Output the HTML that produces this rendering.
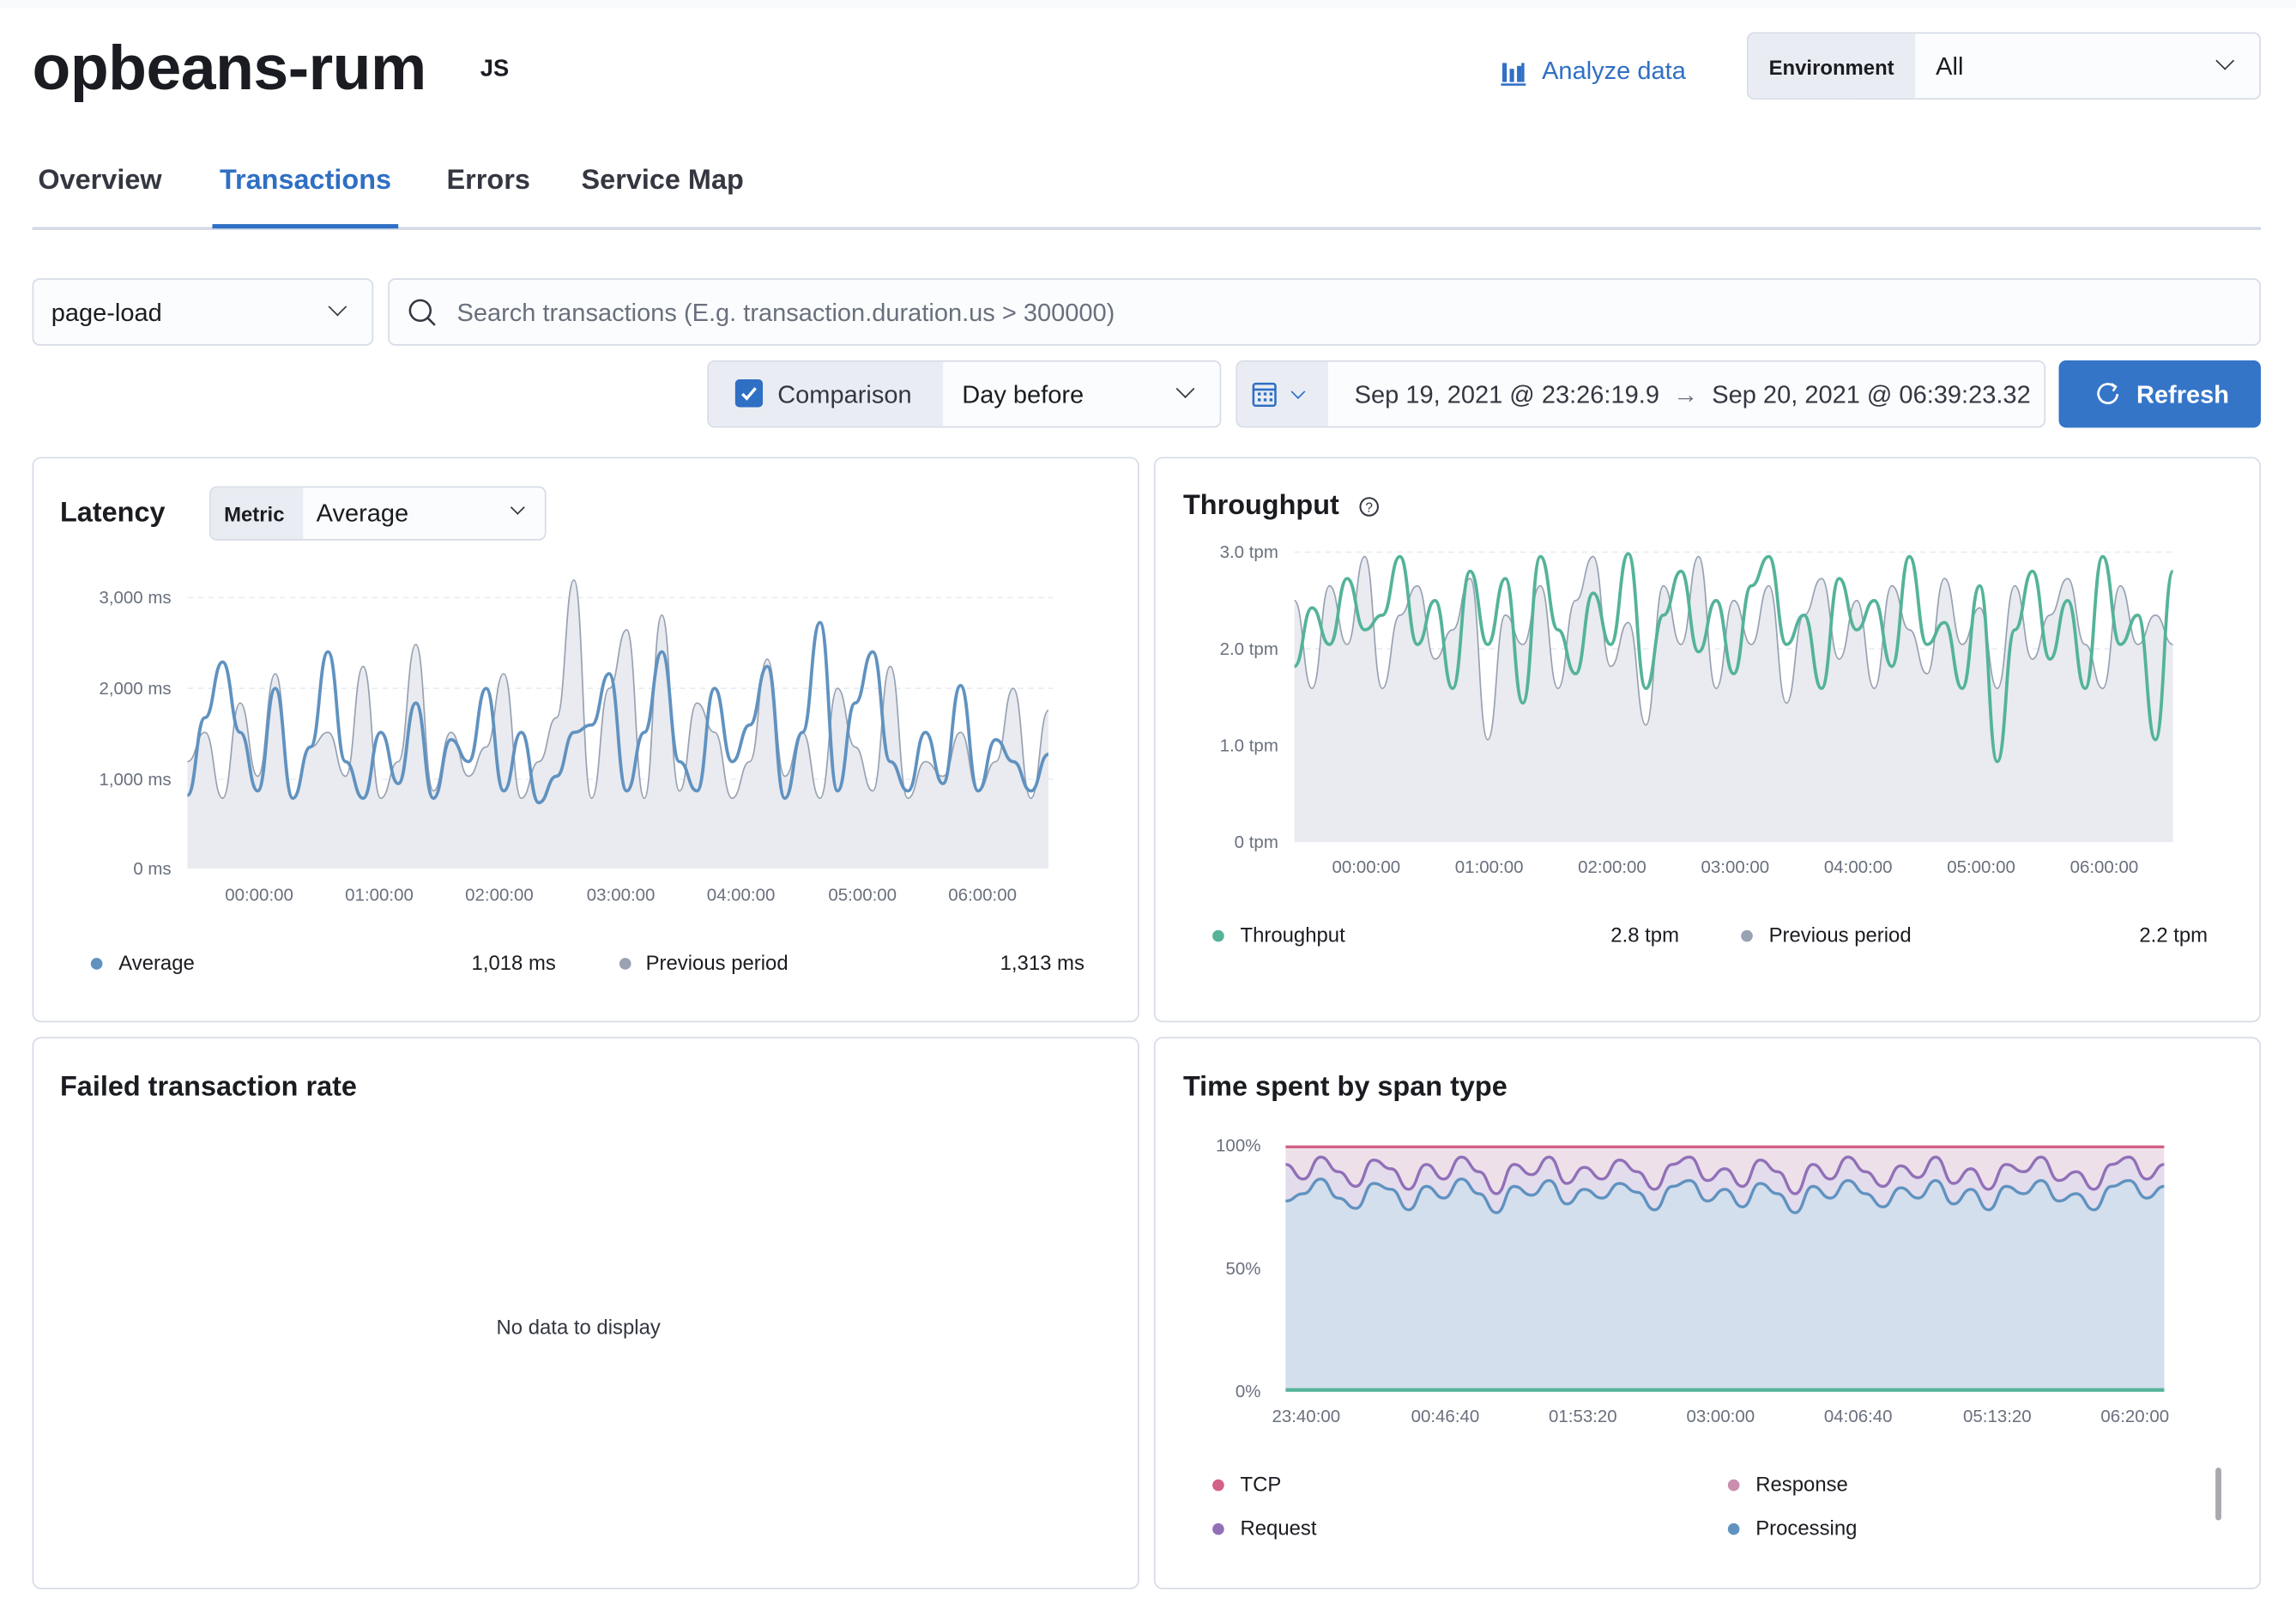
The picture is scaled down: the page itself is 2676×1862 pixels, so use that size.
<!DOCTYPE html>
<html><head><meta charset="utf-8">
<style>
*{box-sizing:border-box;margin:0;padding:0}
html,body{width:2676px;height:1862px;overflow:hidden;background:#fff}
#w{position:absolute;left:0;top:0;width:1568px;height:1091px;transform:scale(1.70663);transform-origin:0 0;font-family:"Liberation Sans",sans-serif;color:#1a1c21}
.a{position:absolute}
.box{position:absolute;border:1px solid #d6dbe6;border-radius:5px;background:#fbfcfd}
.panel{position:absolute;border:1px solid #d6dbe6;border-radius:6px;background:#fff}
.t{position:absolute;white-space:nowrap}
.chev{position:absolute;width:9px;height:9px;border-right:1.5px solid #343741;border-bottom:1.5px solid #343741;transform:rotate(45deg)}
.ax{font-size:12px;fill:#69707d;font-family:"Liberation Sans",sans-serif}
.dot{position:absolute;width:8px;height:8px;border-radius:50%}
</style></head><body><div id="w">
<div class="a" style="left:0;top:0;width:1568px;height:6px;background:#f9fafb"></div>
<div class="t" style="left:22px;top:23px;font-size:43px;font-weight:700;letter-spacing:-0.3px">opbeans-rum</div>
<div class="t" style="left:328px;top:39px;font-size:16px;font-weight:700">JS</div>
<svg class="a" style="left:1025px;top:41px" width="18" height="18" viewBox="0 0 18 18"><g fill="#2f6fc4"><rect x="1" y="2" width="3" height="13"/><rect x="6" y="6" width="3" height="9"/><rect x="11" y="4" width="3" height="11"/><rect x="14" y="2" width="2" height="13"/><rect x="0" y="16" width="17" height="1.5"/></g></svg>
<div class="t" style="left:1053px;top:39px;font-size:17px;color:#2f6fc4;font-weight:500">Analyze data</div>
<div class="box" style="left:1193px;top:22px;width:351px;height:46px;overflow:hidden"><div class="a" style="left:0;top:0;width:114px;height:46px;background:#e9edf3"></div></div>
<div class="t" style="left:1208px;top:38px;font-size:14px;font-weight:700">Environment</div>
<div class="t" style="left:1322px;top:36px;font-size:17px">All</div>
<div class="chev" style="left:1515px;top:37px"></div>
<div class="t" style="left:26px;top:113px;font-size:19px;font-weight:600;color:#343741">Overview</div>
<div class="t" style="left:150px;top:113px;font-size:19px;font-weight:600;color:#2f6fc4">Transactions</div>
<div class="t" style="left:305px;top:113px;font-size:19px;font-weight:600;color:#343741">Errors</div>
<div class="t" style="left:397px;top:113px;font-size:19px;font-weight:600;color:#343741">Service Map</div>
<div class="a" style="left:22px;top:155px;width:1522px;height:2px;background:#d3dae6"></div>
<div class="a" style="left:145px;top:153px;width:127px;height:3px;background:#2f6fc4"></div>
<div class="box" style="left:22px;top:190px;width:233px;height:46px"></div>
<div class="t" style="left:35px;top:204px;font-size:17px">page-load</div>
<div class="chev" style="left:226px;top:205px"></div>
<div class="box" style="left:265px;top:190px;width:1279px;height:46px"></div>
<svg class="a" style="left:278px;top:203px" width="20" height="20"><circle cx="9" cy="9" r="7" fill="none" stroke="#343741" stroke-width="1.5"/><line x1="14" y1="14" x2="19" y2="19" stroke="#343741" stroke-width="1.5"/></svg>
<div class="t" style="left:312px;top:204px;font-size:17px;color:#69707d">Search transactions (E.g. transaction.duration.us &gt; 300000)</div>
<div class="box" style="left:483px;top:246px;width:351px;height:46px;overflow:hidden"><div class="a" style="left:0;top:0;width:160px;height:46px;background:#e9edf3"></div></div>
<svg class="a" style="left:502px;top:259px" width="19" height="19"><rect width="19" height="19" rx="3" fill="#2f6fc4"/><path d="M5 10l3 3 6-7" stroke="#fff" stroke-width="2" fill="none"/></svg>
<div class="t" style="left:531px;top:260px;font-size:17px;color:#343741">Comparison</div>
<div class="t" style="left:657px;top:260px;font-size:17px">Day before</div>
<div class="chev" style="left:805px;top:261px"></div>
<div class="box" style="left:844px;top:246px;width:553px;height:46px;overflow:hidden"><div class="a" style="left:0;top:0;width:62px;height:46px;background:#e9edf3"></div></div>
<svg class="a" style="left:855px;top:260px" width="18" height="18"><rect x="1" y="2" width="15" height="15" rx="1.5" fill="none" stroke="#2f6fc4" stroke-width="1.5"/><line x1="1" y1="6" x2="16" y2="6" stroke="#2f6fc4" stroke-width="1.5"/><g fill="#2f6fc4"><rect x="4" y="8" width="2" height="2"/><rect x="8" y="8" width="2" height="2"/><rect x="12" y="8" width="2" height="2"/><rect x="4" y="12" width="2" height="2"/><rect x="8" y="12" width="2" height="2"/><rect x="12" y="12" width="2" height="2"/></g></svg>
<div class="chev" style="left:883px;top:264px;width:7px;height:7px;border-color:#2f6fc4"></div>
<div class="t" style="left:925px;top:260px;font-size:17px;color:#343741">Sep 19, 2021 @ 23:26:19.9 <span style="color:#69707d">&nbsp;→&nbsp;</span> Sep 20, 2021 @ 06:39:23.32</div>
<div class="a" style="left:1406px;top:246px;width:138px;height:46px;background:#3575c8;border-radius:5px"></div>
<svg class="a" style="left:1432px;top:261px" width="16" height="16"><path d="M12 3A6.5 6.5 0 1 0 14 8" fill="none" stroke="#fff" stroke-width="1.6"/><path d="M10 1l3 2-2 3" fill="none" stroke="#fff" stroke-width="1.4"/></svg>
<div class="t" style="left:1459px;top:260px;font-size:17px;color:#fff;font-weight:600">Refresh</div>

<div class="panel" style="left:22px;top:312px;width:756px;height:386px"></div>
<div class="panel" style="left:788px;top:312px;width:756px;height:386px"></div>
<div class="panel" style="left:22px;top:708px;width:756px;height:377px"></div>
<div class="panel" style="left:788px;top:708px;width:756px;height:377px"></div>

<div class="t" style="left:41px;top:340px;font-size:19px;font-weight:700">Latency</div>
<div class="box" style="left:143px;top:332px;width:230px;height:37px;overflow:hidden;background:#fbfcfd"><div class="a" style="left:0;top:0;width:63px;height:37px;background:#e9edf3"></div></div>
<div class="t" style="left:153px;top:343px;font-size:14px;font-weight:700">Metric</div>
<div class="t" style="left:216px;top:341px;font-size:17px">Average</div>
<div class="chev" style="left:350px;top:343px;width:7px;height:7px"></div>
<div class="t" style="left:808px;top:335px;font-size:19px;font-weight:700">Throughput</div>
<svg class="a" style="left:928px;top:339px" width="14" height="14"><circle cx="7" cy="7" r="6" fill="none" stroke="#343741" stroke-width="1.2"/><text x="7" y="10.5" font-size="9" text-anchor="middle" fill="#343741" font-family="Liberation Sans">?</text></svg>
<div class="t" style="left:41px;top:732px;font-size:19px;font-weight:700">Failed transaction rate</div>
<div class="t" style="left:339px;top:898px;font-size:14px;color:#343741">No data to display</div>
<div class="t" style="left:808px;top:732px;font-size:19px;font-weight:700">Time spent by span type</div>

<div class="dot" style="left:62px;top:654px;background:#6092c0"></div>
<div class="t" style="left:81px;top:649px;font-size:14px">Average</div>
<div class="t" style="left:322px;top:649px;font-size:14px">1,018 ms</div>
<div class="dot" style="left:423px;top:654px;background:#98a2b3"></div>
<div class="t" style="left:441px;top:649px;font-size:14px">Previous period</div>
<div class="t" style="left:683px;top:649px;font-size:14px">1,313 ms</div>
<div class="dot" style="left:828px;top:635px;background:#54b399"></div>
<div class="t" style="left:847px;top:630px;font-size:14px">Throughput</div>
<div class="t" style="left:1100px;top:630px;font-size:14px">2.8 tpm</div>
<div class="dot" style="left:1189px;top:635px;background:#98a2b3"></div>
<div class="t" style="left:1208px;top:630px;font-size:14px">Previous period</div>
<div class="t" style="left:1461px;top:630px;font-size:14px">2.2 tpm</div>
<div class="dot" style="left:828px;top:1010px;background:#d36086"></div>
<div class="t" style="left:847px;top:1005px;font-size:14px">TCP</div>
<div class="dot" style="left:828px;top:1040px;background:#9170b8"></div>
<div class="t" style="left:847px;top:1035px;font-size:14px">Request</div>
<div class="dot" style="left:1180px;top:1010px;background:#ca8eae"></div>
<div class="t" style="left:1199px;top:1005px;font-size:14px">Response</div>
<div class="dot" style="left:1180px;top:1040px;background:#6092c0"></div>
<div class="t" style="left:1199px;top:1035px;font-size:14px">Processing</div>
<div class="a" style="left:1513px;top:1002px;width:4px;height:36px;background:#a8aab0;border-radius:2px"></div>

<svg class="a" style="left:0;top:0" width="1568" height="1091">
<g stroke="#e9edf3" stroke-dasharray="4 3"><line x1="128" y1="408" x2="719" y2="408"/><line x1="128" y1="470" x2="719" y2="470"/><line x1="128" y1="532" x2="719" y2="532"/>
<line x1="884" y1="377" x2="1486" y2="377"/><line x1="884" y1="443" x2="1486" y2="443"/><line x1="884" y1="509" x2="1486" y2="509"/><line x1="878" y1="866" x2="1479" y2="866"/></g>
<g class="ax" text-anchor="end"><text x="117" y="412">3,000 ms</text><text x="117" y="474">2,000 ms</text><text x="117" y="536">1,000 ms</text><text x="117" y="597">0 ms</text>
<text x="873" y="381">3.0 tpm</text><text x="873" y="447">2.0 tpm</text><text x="873" y="513">1.0 tpm</text><text x="873" y="579">0 tpm</text>
<text x="861" y="786">100%</text><text x="861" y="870">50%</text><text x="861" y="954">0%</text></g>
<g class="ax" text-anchor="middle"><text x="177" y="615">00:00:00</text><text x="259" y="615">01:00:00</text><text x="341" y="615">02:00:00</text><text x="424" y="615">03:00:00</text><text x="506" y="615">04:00:00</text><text x="589" y="615">05:00:00</text><text x="671" y="615">06:00:00</text>
<text x="933" y="596">00:00:00</text><text x="1017" y="596">01:00:00</text><text x="1101" y="596">02:00:00</text><text x="1185" y="596">03:00:00</text><text x="1269" y="596">04:00:00</text><text x="1353" y="596">05:00:00</text><text x="1437" y="596">06:00:00</text>
<text x="892" y="971">23:40:00</text><text x="987" y="971">00:46:40</text><text x="1081" y="971">01:53:20</text><text x="1175" y="971">03:00:00</text><text x="1269" y="971">04:06:40</text><text x="1364" y="971">05:13:20</text><text x="1458" y="971">06:20:00</text></g>
<g id="charts"></g>
</svg>
</div>
<script>
function smooth(x0,dx,a){let d='M'+x0+','+a[0];for(let i=1;i<a.length;i++){const xp=x0+dx*(i-1),x=x0+dx*i;d+=' C'+(xp+dx/2)+','+a[i-1]+' '+(x-dx/2)+','+a[i]+' '+x+','+a[i];}return d;}
const latB=[543,490,452,500,540,470,545,510,445,520,545,500,535,480,545,505,520,470,540,500,548,530,500,495,460,540,500,445,520,540,470,520,495,455,545,500,425,540,480,445,520,540,500,535,468,540,505,520,540,515];
const latG=[520,500,545,480,530,460,545,510,500,530,455,545,520,440,540,500,530,510,460,545,520,490,396,545,470,430,545,420,540,480,500,545,520,450,530,500,545,470,510,540,455,545,520,530,500,540,520,470,545,485];
const thG=[455,415,440,395,430,420,380,440,410,470,390,440,395,480,380,430,460,405,440,378,470,420,390,445,410,460,400,380,440,420,470,395,430,410,455,380,440,425,470,400,520,430,390,450,410,470,380,440,420,505,390];
const thP=[410,470,400,440,380,470,420,400,450,430,395,505,420,440,400,470,410,380,455,425,495,400,440,380,470,410,440,400,480,420,395,450,410,470,400,430,460,395,440,415,470,400,450,420,395,440,470,400,440,420,440];
const sp=[795,805,790,800,810,792,798,812,795,805,790,800,815,795,802,790,808,797,805,792,800,812,795,790,806,798,810,792,800,815,795,805,790,800,810,796,804,790,808,798,812,795,800,790,806,800,812,795,790,805,795];
const sb=[820,815,805,818,825,808,812,826,810,818,805,815,828,810,816,806,822,812,818,808,814,826,810,806,820,812,824,808,815,828,810,818,806,815,824,811,818,806,822,812,826,810,815,806,820,815,826,810,806,818,810];
let h='';
let g=smooth(128,12,latG);
h+='<path d="'+g+' L716,593 L128,593 Z" fill="#e9ebf0"/>';
h+='<path d="'+g+'" fill="none" stroke="#98a2b3" stroke-width="1"/>';
h+='<path d="'+smooth(128,12,latB)+'" fill="none" stroke="#6092c0" stroke-width="2.2"/>';
let p=smooth(884,12,thP);
h+='<path d="'+p+' L1484,575 L884,575 Z" fill="#e9ebf0"/>';
h+='<path d="'+p+'" fill="none" stroke="#98a2b3" stroke-width="1"/>';
h+='<path d="'+smooth(884,12,thG)+'" fill="none" stroke="#54b399" stroke-width="2.2"/>';
h+='<rect x="878" y="783" width="600" height="167" fill="#eee0e9"/>';
let s=smooth(878,12,sp);h+='<path d="'+s+' L1478,950 L878,950 Z" fill="#e3dcec"/>';
let b=smooth(878,12,sb);h+='<path d="'+b+' L1478,950 L878,950 Z" fill="#d3dfec"/>';
h+='<path d="'+s+'" fill="none" stroke="#9170b8" stroke-width="2"/>';
h+='<path d="'+b+'" fill="none" stroke="#6092c0" stroke-width="2"/>';
h+='<line x1="878" y1="783" x2="1478" y2="783" stroke="#d36086" stroke-width="2"/>';
h+='<line x1="878" y1="949" x2="1478" y2="949" stroke="#54b399" stroke-width="2.5"/>';
document.getElementById('charts').innerHTML=h;
</script>
</body></html>
